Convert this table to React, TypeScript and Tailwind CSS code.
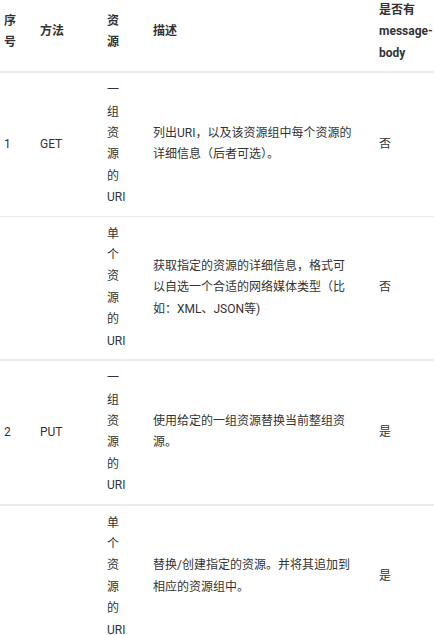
const rows = [
  {
    no: '1',
    method: 'GET',
    resource: '一组资源的URI',
    desc: '列出URI，以及该资源组中每个资源的详细信息（后者可选）。',
    body: '否',
    border: 'border-b',
  },
  {
    no: '',
    method: '',
    resource: '单个资源的URI',
    desc: '获取指定的资源的详细信息，格式可以自选一个合适的网络媒体类型（比如：XML、JSON等)',
    body: '否',
    border: 'border-b-2',
  },
  {
    no: '2',
    method: 'PUT',
    resource: '一组资源的URI',
    desc: '使用给定的一组资源替换当前整组资源。',
    body: '是',
    border: 'border-b-2',
  },
  {
    no: '',
    method: '',
    resource: '单个资源的URI',
    desc: '替换/创建指定的资源。并将其追加到相应的资源组中。',
    body: '是',
    border: '',
  },
];

export default function App() {
  return (
    <div
      className="w-[434px] h-[635px] overflow-hidden bg-white text-[12px] leading-[21.4px] text-[#333]"
      style={{ fontFamily: 'Roboto, "Noto Sans CJK SC", sans-serif' }}
    >
      {/* header */}
      <div className="flex items-center border-b-2 border-[#e8ecf1] pb-[7px] font-bold">
        <div className="w-[36px] shrink-0 pl-[4px] pr-[14px]">序号</div>
        <div className="w-[67px] shrink-0 pl-[4px]">方法</div>
        <div className="w-[46px] shrink-0 pl-[4px] pr-[20px]">资源</div>
        <div className="w-[226px] shrink-0 pl-[4px] pr-[22px]">描述</div>
        <div className="flex-1 pl-[4px] break-words">是否有message-body</div>
      </div>

      {rows.map((row, i) => (
        <div
          key={i}
          className={`flex items-center py-[7px] border-[#e8ecf1] ${row.border}`}
        >
          <div className="w-[36px] shrink-0 pl-[4px] pr-[14px]">{row.no}</div>
          <div className="w-[67px] shrink-0 pl-[4px]">{row.method}</div>
          <div className="w-[46px] shrink-0 pl-[4px] pr-[20px]">{row.resource}</div>
          <div className="w-[226px] shrink-0 pl-[4px] pr-[22px]">{row.desc}</div>
          <div className="flex-1 pl-[4px]">{row.body}</div>
        </div>
      ))}
    </div>
  );
}
